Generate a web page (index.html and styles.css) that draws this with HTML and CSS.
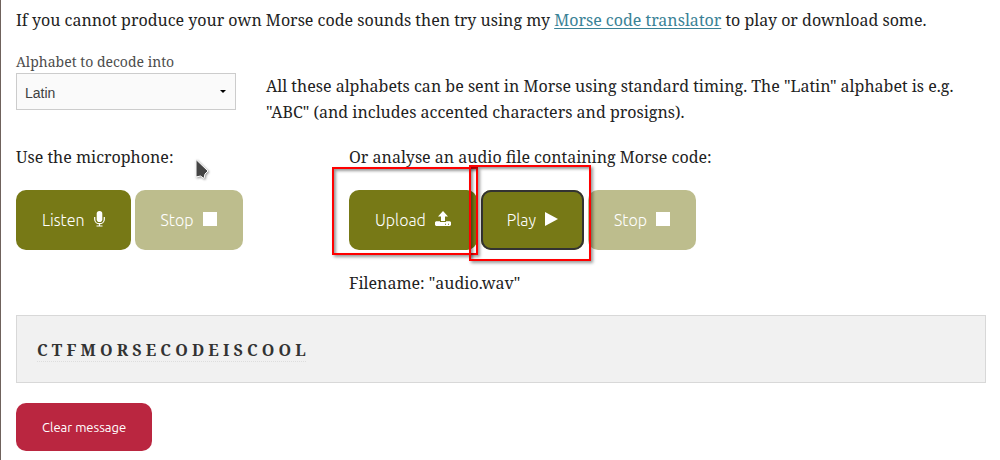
FILE: index.html
```html
<!DOCTYPE html>
<html lang="en">
<head>
<meta charset="utf-8">
<meta name="viewport" content="width=device-width, initial-scale=1">
<title>Morse Code Audio Decoder</title>
<link rel="stylesheet" href="styles.css">
</head>
<body>
<main class="page">
  <p class="intro">If you cannot produce your own Morse code sounds then try using my <a class="link" href="#translator">Morse code translator</a> to play or download some.</p>

  <div class="row">
    <div class="col-quarter">
      <label class="field-label" for="alphabet">Alphabet to decode into</label>
      <div class="select-wrap">
        <select class="select" id="alphabet">
          <option>Latin</option>
        </select>
        <svg class="select-arrow" viewBox="0 0 6 3" aria-hidden="true"><path d="M0 0h6L3 3z"/></svg>
      </div>
    </div>
    <p class="alphabet-note">All these alphabets can be sent in Morse using standard timing. The "Latin" alphabet is e.g. "ABC" (and includes accented characters and prosigns).</p>
  </div>

  <div class="row sources">
    <section class="col-third">
      <p class="source-title">Use the microphone:</p>
      <div class="buttons">
        <button class="button" type="button">Listen
          <svg class="icon icon-mic" viewBox="0 0 11 16" aria-hidden="true"><rect class="fill" x="2.700" y="0" width="5.600" height="11" rx="2.800"/><path class="stroke" d="M.7 6v2.200c0 6 9.600 6 9.600 0V6M5.500 13v2M2.500 15h6"/></svg>
        </button>
        <button class="button" type="button" disabled>Stop
          <svg class="icon icon-stop" viewBox="0 0 14 14" aria-hidden="true"><path class="fill" d="M0 0h14v14H0z"/></svg>
        </button>
      </div>
      <svg class="cursor" viewBox="0 0 14 22" aria-hidden="true"><path d="M1 .5v17.500L5.500 17l3.500 2.500 1-4.500 3-3z"/></svg>
    </section>
    <section class="col-rest">
      <p class="source-title">Or analyse an audio file containing Morse code:</p>
      <div class="buttons">
        <div class="marked">
          <button class="button" type="button">Upload
            <svg class="icon icon-upload" viewBox="0 0 16 15" aria-hidden="true"><path class="fill" fill-rule="evenodd" d="M8 0l5 5.500H10V10H6V5.500H3zM1 10.200h4V11h6v-.8h4l1 1V14l-1 1H1l-1-1v-2.800zM10 12.700v1h1v-1zM13 12.700v1h1v-1z"/></svg>
          </button>
          <span class="marker marker-upload"></span>
        </div>
        <div class="marked">
          <button class="button focused" type="button">Play
            <svg class="icon icon-play" viewBox="0 0 13 14" aria-hidden="true"><path class="fill" d="M0 0l13 7-13 7z"/></svg>
          </button>
          <span class="marker marker-play"></span>
        </div>
        <button class="button" type="button" disabled>Stop
          <svg class="icon icon-stop" viewBox="0 0 14 14" aria-hidden="true"><path class="fill" d="M0 0h14v14H0z"/></svg>
        </button>
      </div>
      <p class="filename">Filename: "audio.wav"</p>
    </section>
  </div>

  <div class="output"><span class="message">C T F M O R S E C O D E I S C O O L</span></div>
  <button class="button button-clear" type="button">Clear message</button>
</main>
</body>
</html>
```
FILE: styles.css
```css
* { box-sizing: border-box; }
body {
  margin: 0;
  background: #fff;
  color: #222;
  font: 16px/26px "Noto Serif", "Droid Serif", "DejaVu Serif Condensed", serif;
}
p { margin: 0; }
.page {
  min-height: 100vh;
  padding: 7px 14px 9px 15px;
  border-left: 1px solid #6f625c;
}
.link { color: #3a8296; text-decoration: underline 1px; text-underline-offset: 2px; text-decoration-skip-ink: none; }
.row { display: flex; gap: 30px; }
.intro { margin-bottom: 18px; }
.col-quarter { flex: 0 0 220px; }
.field-label { display: block; font-size: 14px; line-height: 22px; color: #4d4d4d; }
.select-wrap { display: grid; align-items: center; }
.select {
  grid-area: 1 / 1;
  width: 100%;
  height: 37px;
  padding: 2px 8px 0;
  border: 1px solid #ccc;
  border-radius: 0;
  background: #fafafa;
  color: #404040;
  font: 14px "Liberation Sans", Arial, sans-serif;
  appearance: none;
}
.select-arrow { grid-area: 1 / 1; justify-self: end; width: 6px; height: 3px; margin-right: 10px; pointer-events: none; }
.alphabet-note { flex: 1; padding-top: 22px; }
.sources { margin-top: 19px; }
.col-third { position: relative; flex: 0 0 303px; }
.col-rest { flex: 1; }
.source-title { margin-bottom: 20px; }
.buttons { display: flex; gap: 4px; }
.marked { position: relative; }
.button {
  display: inline-flex;
  align-items: center;
  gap: 9px;
  height: 60px;
  padding: 0 26px;
  border: 0;
  border-radius: 10px;
  background: #777916;
  color: #fff;
  font: 300 16px "Ubuntu", "Oxygen", "Noto Sans", sans-serif;
}
.button:disabled { background: #bdbd8d; }
.focused { box-shadow: inset 0 0 0 2px #333; }
.icon { display: block; margin-bottom: 3px; }
.icon .fill { fill: #fff; }
.icon .stroke { fill: none; stroke: #fff; stroke-width: 1.2; }
.icon-mic { width: 11px; height: 16px; }
.icon-stop { width: 14px; height: 14px; }
.icon-upload { width: 16px; height: 15px; }
.icon-play { width: 13px; height: 14px; }
.marker {
  position: absolute;
  border: 2px solid #f00;
  box-shadow: 2px 2px 3px rgba(0, 0, 0, .4), inset 2px 2px 3px rgba(0, 0, 0, .4);
  pointer-events: none;
  z-index: 1;
}
.marker-upload { inset: -23px -1px -5px -17px; }
.marker-play { inset: -25px -7px -11px -12px; }
.cursor { position: absolute; left: 179px; top: 15px; width: 14px; height: 22px; fill: #444; stroke: #fff; filter: drop-shadow(1px 1px 1px rgba(0, 0, 0, .4)); }
.filename { margin-top: 20px; }
.output {
  margin: 19px 0 20px;
  padding: 21px 20px 19px;
  border: 1px solid #d8d8d8;
  background: #f1f1f1;
  color: #333;
  font-weight: bold;
}
.message { border-bottom: 1px dotted #ddd; }
.button-clear { height: 48px; background: #ba2640; font-size: 13px; font-weight: 400; }
```
